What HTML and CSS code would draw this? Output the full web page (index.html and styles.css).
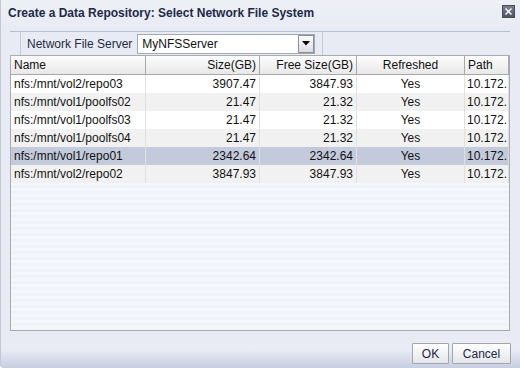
FILE: index.html
```html
<!DOCTYPE html>
<html lang="en">
<head>
  <meta charset="UTF-8" />
  <title>Create a Data Repository</title>
  <link rel="stylesheet" href="styles.css">
</head>
<body>

  <div class="dialog">
    <div class="titlebar">
      <span class="title">Create a Data Repository: Select Network File System</span>
      <span class="close">
        <svg width="13" height="13" viewBox="0 0 13 13">
          <defs>
            <linearGradient id="cg" x1="0" y1="0" x2="0" y2="1">
              <stop offset="0" stop-color="#7a8191"/>
              <stop offset="1" stop-color="#4b5262"/>
            </linearGradient>
          </defs>
          <rect x="0.5" y="0.5" width="12" height="12" fill="url(#cg)" stroke="#474d5b"/>
          <path d="M3.5 3.5 L9.5 9.5 M9.5 3.5 L3.5 9.5" stroke="#fff" stroke-width="1.4"/>
        </svg>
      </span>
    </div>

    <div class="content">
      <div class="toolbar">
        <div class="tb-group">
          <label class="tb-label">Network File Server</label>
          <div class="select">
            <span class="select-value">MyNFSServer</span>
            <span class="select-btn">
              <svg width="8" height="5" viewBox="0 0 8 5"><path d="M0 0 H8 L4 4.5 Z" fill="#000"/></svg>
            </span>
          </div>
        </div>
      </div>

      <div class="grid">
        <table>
          <colgroup>
            <col style="width:135px">
            <col style="width:114px">
            <col style="width:97px">
            <col style="width:108px">
            <col style="width:44px">
          </colgroup>
          <thead>
            <tr>
              <th>Name</th>
              <th class="num">Size(GB)</th>
              <th class="num">Free Size(GB)</th>
              <th class="mid">Refreshed</th>
              <th>Path</th>
            </tr>
          </thead>
          <tbody>
            <tr>
              <td>nfs:/mnt/vol2/repo03</td>
              <td class="num">3907.47</td>
              <td class="num">3847.93</td>
              <td class="mid">Yes</td>
              <td class="path">10.172.</td>
            </tr>
            <tr class="alt">
              <td>nfs:/mnt/vol1/poolfs02</td>
              <td class="num">21.47</td>
              <td class="num">21.32</td>
              <td class="mid">Yes</td>
              <td class="path">10.172.</td>
            </tr>
            <tr>
              <td>nfs:/mnt/vol1/poolfs03</td>
              <td class="num">21.47</td>
              <td class="num">21.32</td>
              <td class="mid">Yes</td>
              <td class="path">10.172.</td>
            </tr>
            <tr class="alt">
              <td>nfs:/mnt/vol1/poolfs04</td>
              <td class="num">21.47</td>
              <td class="num">21.32</td>
              <td class="mid">Yes</td>
              <td class="path">10.172.</td>
            </tr>
            <tr class="sel">
              <td>nfs:/mnt/vol1/repo01</td>
              <td class="num">2342.64</td>
              <td class="num">2342.64</td>
              <td class="mid">Yes</td>
              <td class="path">10.172.</td>
            </tr>
            <tr class="alt">
              <td>nfs:/mnt/vol2/repo02</td>
              <td class="num">3847.93</td>
              <td class="num">3847.93</td>
              <td class="mid">Yes</td>
              <td class="path">10.172.</td>
            </tr>
          </tbody>
        </table>
      </div>
    </div>

    <div class="footer">
      <button class="btn btn-ok">OK</button>
      <button class="btn btn-cancel">Cancel</button>
    </div>
  </div>

</body>
</html>
```

FILE: styles.css
```css
body {
  margin: 0;
  font-family: 'Liberation Sans', Arial, sans-serif;
  font-size: 12px;
  color: #111;
}

.dialog {
  box-sizing: border-box;
  width: 520px;
  height: 368px;
  border-left: 1px solid #c2c7d5;
  border-bottom-left-radius: 4px;
  background: linear-gradient(to bottom, #eef0f6 0, #e8ebf4 30px, #e8ebf4 350px, #c6cee0 368px);
  display: flex;
  flex-direction: column;
}

.titlebar {
  box-sizing: border-box;
  height: 31px;
  padding: 5px 5px 0 7px;
  display: flex;
  justify-content: space-between;
  align-items: flex-start;
}

.title {
  font-weight: bold;
  line-height: 16px;
  color: #1b2a47;
}

.close {
  display: block;
  width: 13px;
  height: 13px;
}

.close svg {
  display: block;
}

.content {
  padding: 0 10px 0 9px;
}

.toolbar {
  box-sizing: border-box;
  height: 24px;
  border-top: 1px solid #b7c0d3;
  display: flex;
}

.tb-group {
  margin-left: 10px;
  padding: 0 7px 0 6px;
  border-left: 1px solid #c3cad9;
  border-right: 1px solid #c3cad9;
  display: flex;
  align-items: center;
  gap: 5px;
}

.tb-label {
  color: #1d2b45;
  line-height: 14px;
}

.select {
  box-sizing: border-box;
  width: 178px;
  height: 20px;
  border: 1px solid #a3a8b0;
  background: #fff;
  display: flex;
  align-items: center;
  justify-content: space-between;
}

.select-value {
  padding-left: 4px;
  line-height: 14px;
}

.select-btn {
  box-sizing: border-box;
  width: 16px;
  height: 18px;
  border: 1px solid #8d9096;
  background: linear-gradient(to bottom, #fdfdfd, #dadcdf);
  display: flex;
  align-items: center;
  justify-content: center;
}

.select-btn svg {
  display: block;
}

.grid {
  box-sizing: border-box;
  height: 276px;
  border: 1px solid #a9abaf;
  background: repeating-linear-gradient(to bottom, #f4f7fb 0, #f4f7fb 3px, #eff3f9 3px, #eff3f9 6px);
}

table {
  width: 498px;
  table-layout: fixed;
  border-spacing: 0;
}

th, td {
  padding: 0 3px;
  white-space: nowrap;
  overflow: hidden;
  text-align: left;
}

th {
  font-weight: normal;
  line-height: 18px;
  color: #111;
  background: linear-gradient(to bottom, #fdfdfd, #e8e8e8);
  border-right: 1px solid #a8a8a8;
  border-bottom: 1px solid #a8a8a8;
}

td {
  line-height: 18px;
  background: #fff;
  border-right: 1px solid #e0e0e0;
}

td.path {
  padding: 0 0 0 2px;
}

th.num, td.num {
  text-align: right;
}

th.mid, td.mid {
  text-align: center;
}

tr.alt td {
  background: #f1f1f1;
}

tr.sel td {
  background: #c3cadc;
}

.footer {
  flex: 1;
  padding: 12px 9px 0 0;
  display: flex;
  justify-content: flex-end;
  align-items: flex-start;
  gap: 3px;
}

.btn {
  box-sizing: border-box;
  height: 21px;
  padding: 0;
  border: 1px solid #a2a6ae;
  border-radius: 1px;
  background: linear-gradient(to bottom, #ffffff, #e3e5ea);
  font-family: 'Liberation Sans', Arial, sans-serif;
  font-size: 12px;
  color: #1a2640;
}

.btn-ok {
  width: 37px;
}

.btn-cancel {
  width: 59px;
}
```
